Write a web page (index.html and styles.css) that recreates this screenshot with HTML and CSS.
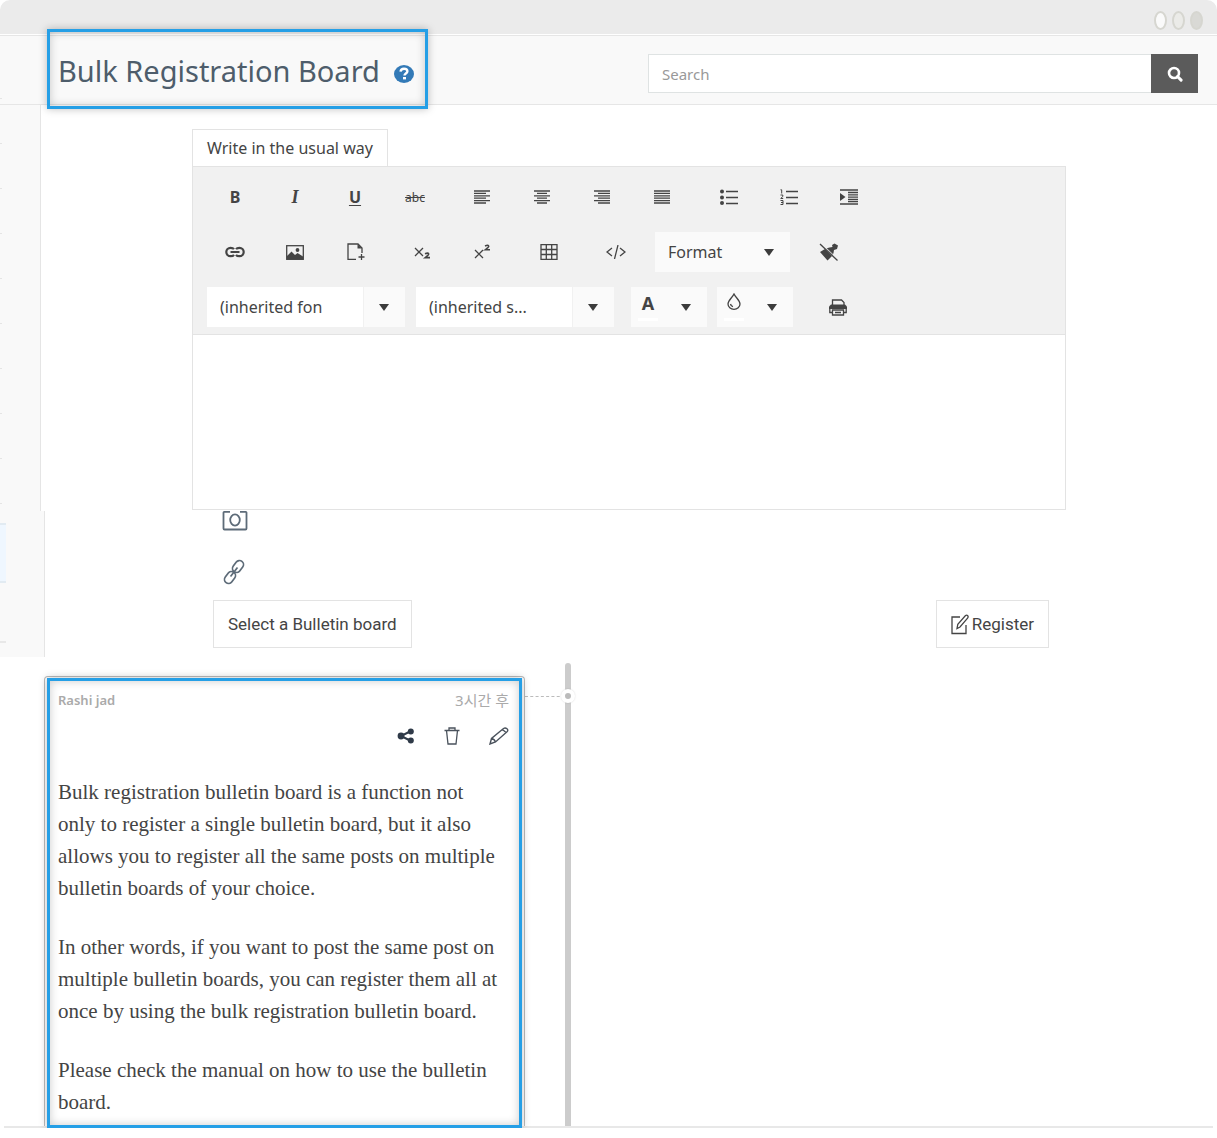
FILE: index.html
```html
<!DOCTYPE html>
<html lang="en">
<head>
    <meta charset="UTF-8">
    <meta name="viewport" content="width=device-width, initial-scale=1.0">
    <title>Bulk Registration Board</title>
    <link rel="stylesheet" href="styles.css">
</head>
<body>
    <div class="window-bar">
        <span class="window-dot light"></span>
        <span class="window-dot"></span>
        <span class="window-dot dark"></span>
    </div>

    <header class="page-header">
        <div class="highlight title-box">
            <h1>Bulk Registration Board</h1>
            <a href="#" class="help" aria-label="Help">
                <svg width="20" height="18" viewBox="0 0 20 18">
                    <ellipse cx="10" cy="9" rx="10" ry="9" fill="#337ab7"/>
                    <path d="M6.5 6.6C6.8 4.6 8.2 3.7 10 3.7c2 0 3.4 1 3.4 2.6 0 2.3-2.9 2.2-2.9 4.2" fill="none" stroke="#fff" stroke-width="2.4"/>
                    <path d="M9 12h3v2.4H9z" fill="#fff"/>
                </svg>
            </a>
        </div>
        <form class="search" role="search">
            <input type="text" placeholder="Search" aria-label="Search">
            <button type="button" aria-label="Search">
                <svg width="16" height="16" viewBox="0 0 16 16" fill="none" stroke="#fff">
                    <circle cx="7" cy="7" r="5" stroke-width="2.6"/>
                    <path d="M10.5 10.5l3.6 3.6" stroke-width="3" stroke-linecap="round"/>
                </svg>
            </button>
        </form>
    </header>

    <div class="section">
        <aside class="sidebar"></aside>
        <main class="content">
            <div class="editor">
                <button class="editor-tab">Write in the usual way</button>
                <div class="toolbar">
                    <div class="toolbar-row">
                        <div class="group">
                            <button class="tool bold">B</button>
                            <button class="tool italic">I</button>
                            <button class="tool underline">U</button>
                            <button class="tool strike">abc</button>
                        </div>
                        <div class="group">
                            <button class="tool" aria-label="Align left">
                                <svg width="16" height="14" viewBox="0 0 16 14"><path d="M0 1h16M0 3.4h12M0 5.8h16M0 8.2h12M0 10.6h16M0 13h12"/></svg>
                            </button>
                            <button class="tool" aria-label="Align center">
                                <svg width="16" height="14" viewBox="0 0 16 14"><path d="M0 1h16M3 3.4h10M0 5.8h16M3 8.2h10M0 10.6h16M3 13h10"/></svg>
                            </button>
                            <button class="tool" aria-label="Align right">
                                <svg width="16" height="14" viewBox="0 0 16 14"><path d="M0 1h16M4 3.4h12M0 5.8h16M4 8.2h12M0 10.6h16M4 13h12"/></svg>
                            </button>
                            <button class="tool" aria-label="Justify">
                                <svg width="16" height="14" viewBox="0 0 16 14"><path d="M0 1h16M0 3.4h16M0 5.8h16M0 8.2h16M0 10.6h16M0 13h16"/></svg>
                            </button>
                        </div>
                        <div class="group">
                            <button class="tool" aria-label="Bulleted list">
                                <svg width="18" height="16" viewBox="0 0 18 16"><path d="M6 2.5h12M6 8.5h12M6 14.5h12"/><g class="solid"><circle cx="2" cy="2.5" r="2"/><circle cx="2" cy="8.5" r="2"/><circle cx="2" cy="14" r="2"/></g></svg>
                            </button>
                            <button class="tool" aria-label="Numbered list">
                                <svg width="18" height="16" viewBox="0 0 18 16"><path d="M6 2.5h12M6 8.5h12M6 14.5h12"/><path stroke-width="1" d="M.5 .8h1.200v3.700M.5 6h2.300v1.500L.7 9.500h2.500M.5 11.500h2.500v4H.5M1 13.500h2"/></svg>
                            </button>
                            <button class="tool" aria-label="Indent">
                                <svg width="18" height="16" viewBox="0 0 18 16"><path d="M0 1h18M8 3.5h10M8 5.8h10M8 8.1h10M8 10.4h10M8 12.5h10M0 15h18"/><path class="solid" d="M0 4l5.5 4L0 12z"/></svg>
                            </button>
                        </div>
                    </div>

                    <div class="toolbar-row">
                        <div class="group">
                            <button class="tool" aria-label="Insert link">
                                <svg width="20" height="12" viewBox="0 0 20 12"><path stroke-width="2.2" d="M9 3.2C8.3 2.2 7.3 1.8 5.5 1.8a4.2 4.2 0 0 0 0 8.4C7.3 10.2 8.3 9.800 9 8.800M11 3.200C11.700 2.200 12.700 1.800 14.500 1.800a4.200 4.200 0 0 1 0 8.400C12.700 10.200 11.700 9.800 11 8.800M5.500 6h9"/></svg>
                            </button>
                            <button class="tool" aria-label="Insert image">
                                <svg width="18" height="15" viewBox="0 0 18 15"><rect x=".7" y=".7" width="16.6" height="13.6"/><path class="solid" d="M1 11l4.500-4.500L9 10l2.500-2L17 11.500v3H1z"/><circle class="solid" cx="11.5" cy="5" r="1.9"/></svg>
                            </button>
                            <button class="tool" aria-label="Insert file">
                                <svg width="20" height="18" viewBox="0 0 20 18"><path d="M11 16.300H3V1h10l4 4v5M16.500 11v6M13.500 14h6"/><path class="solid" d="M12.500 1L17 5.500h-4.500z"/></svg>
                            </button>
                        </div>
                        <div class="group">
                            <button class="tool" aria-label="Subscript">
                                <svg width="16" height="14" viewBox="0 0 16 14"><path d="M1 3l8 8M9 3l-8 8"/><path stroke-width="1.600" d="M11 8.800q3.500-1.500 3.700.3 0 1-3.400 3.500H16"/></svg>
                            </button>
                            <button class="tool" aria-label="Superscript">
                                <svg width="16" height="16" viewBox="0 0 16 16"><path d="M1 6l8 8M9 6l-8 8"/><path stroke-width="1.600" d="M11 2q3.500-1.500 3.700.3 0 1-3.400 3.500H16"/></svg>
                            </button>
                        </div>
                        <div class="group">
                            <button class="tool" aria-label="Insert table">
                                <svg width="18" height="16" viewBox="0 0 18 16"><path d="M1 .7h16v14.600H1zM1 5.500h16M1 10.500h16M6.300 1v14M11.700 1v14"/></svg>
                            </button>
                        </div>
                        <div class="group">
                            <button class="tool" aria-label="View HTML">
                                <svg width="20" height="14" viewBox="0 0 20 14"><path d="M6 3L1 7l5 4M14 3l5 4-5 4M12 0L8.500 14"/></svg>
                            </button>
                        </div>
                        <div class="picker format">
                            <select aria-label="Format"><option>Format</option></select>
                        </div>
                        <button class="tool" aria-label="Clean formatting">
                            <svg width="20" height="18" viewBox="0 0 20 18"><path class="solid" d="M1 9l5-3 7 7-4.500 4.500zM7 5.500l3.500-1 3-.5L13 2l2.500-1.500L19 2.500 18 6l-3 1-.5 3-1 2.500z"/><path stroke="#f1f1f1" stroke-width="1" d="M2.500 .5l16.500 16"/><path d="M1 1l17.500 16.500"/></svg>
                        </button>
                    </div>

                    <div class="toolbar-row">
                        <div class="picker combo">
                            <select aria-label="Font family"><option>(inherited fon</option></select>
                        </div>
                        <div class="picker combo">
                            <select aria-label="Font size"><option>(inherited s...</option></select>
                        </div>
                        <div class="colors">
                            <button class="color-tool" aria-label="Text color">
                                <span class="swatch">A</span>
                                <span class="caret"></span>
                            </button>
                            <button class="color-tool" aria-label="Background color">
                                <span class="swatch">
                                    <svg width="14" height="17" viewBox="0 0 14 17"><path d="M7 1C5 5 1 7.500 1 11a6 5.300 0 0 0 12 0C13 7.500 9 5 7 1zM3.500 11c.3 1.500 1 2.300 2.500 2.700"/></svg>
                                </span>
                                <span class="caret"></span>
                            </button>
                        </div>
                        <button class="tool" aria-label="Print">
                            <svg width="18" height="17" viewBox="0 0 18 17"><path d="M3.500 6V1h9l2.500 2.500V6"/><path class="solid" d="M2 5.500h14l2 2V10H0V7.500z"/><path d="M3.500 13.500H.8V9h16.400v4.500h-2.700M3.500 11h11v5h-11zM6 13.500h6"/></svg>
                        </button>
                    </div>
                </div>
                <textarea class="editor-text" aria-label="Post content"></textarea>
            </div>
        </main>
    </div>

    <div class="section">
        <aside class="sidebar lower">
            <div class="sidebar-item active"></div>
            <div class="sidebar-item"></div>
        </aside>
        <div class="content">
            <div class="attach">
                <button class="attach-btn" aria-label="Attach photo">
                    <svg width="26" height="20" viewBox="0 0 26 20" fill="none" stroke="#5d6b78" stroke-width="1.8"><path d="M8 .9H2.200Q1.500.9 1.500 1.600V17.500q0 1 1 1H23.500q1 0 1-1V1.600q0-.7-.7-.7H18"/><ellipse cx="13" cy="9" rx="4.8" ry="5.6"/></svg>
                </button>
                <button class="attach-btn link" aria-label="Attach link">
                    <svg width="24" height="26" viewBox="0 0 24 26" fill="none" stroke="#5d6b78" stroke-width="1.7"><rect x="12" y="1" width="8" height="13" rx="4" transform="rotate(37 16 7.5)"/><rect x="4" y="12" width="8" height="13" rx="4" transform="rotate(37 8 18.5)"/><path d="M8.500 17.500l7-9"/></svg>
                </button>
                <div class="attach-actions">
                    <button class="btn">Select a Bulletin board</button>
                    <button class="btn">
                        <svg width="18" height="21" viewBox="0 0 18 21" fill="none" stroke="#444" stroke-width="1.3"><path d="M9 3H1v16.500h14V11"/><path d="M6 14.500l.8-4.200L14.500 1.500q1.300-.8 2.300.3.800 1.200-.2 2.400L9 13z"/></svg>
                        Register
                    </button>
                </div>
            </div>
        </div>
    </div>

    <section class="timeline">
        <article class="card">
            <div class="highlight post">
                <div class="post-meta">
                    <span class="author">Rashi jad</span>
                    <time lang="ko">3시간 후</time>
                </div>
                <div class="post-actions">
                    <button aria-label="Share">
                        <svg width="18" height="16" viewBox="0 0 18 16"><path d="M14 3L4 8l10 5" fill="none" stroke="#2f3a48" stroke-width="2"/><g fill="#2f3a48"><circle cx="4" cy="8" r="3.4"/><circle cx="13.8" cy="3.6" r="3"/><circle cx="13.8" cy="12.4" r="3"/></g></svg>
                    </button>
                    <button aria-label="Delete">
                        <svg width="18" height="18" viewBox="0 0 18 18" fill="none" stroke="#4a525c" stroke-width="1.3"><path d="M1.500 3.500h15M3.500 3.500L5 17h8l1.500-13.500M6 3.500V1h6v2.500"/></svg>
                    </button>
                    <button aria-label="Edit">
                        <svg width="20" height="18" viewBox="0 0 20 18" fill="none" stroke="#4a525c" stroke-width="1.4"><path d="M1 17l1.500-5.500L14.500 1.500q1.800-1 3.500.3 1.600 1.400 0 3L6.500 15zM2.500 11.500Q5.500 12 6.500 15M13.500 2.500l3.500 3"/></svg>
                    </button>
                </div>
                <div class="post-body">
                    <p>Bulk registration bulletin board is a function not only to register a single bulletin board, but it also allows you to register all the same posts on multiple bulletin boards of your choice.</p>
                    <p>In other words, if you want to post the same post on multiple bulletin boards, you can register them all at once by using the bulk registration bulletin board.</p>
                    <p>Please check the manual on how to use the bulletin board.</p>
                </div>
            </div>
        </article>
        <div class="connector"></div>
        <div class="axis"><span class="axis-dot"></span></div>
    </section>
</body>
</html>
```
FILE: styles.css
```css
* {
    margin: 0;
    padding: 0;
    box-sizing: border-box;
}

body {
    background: #fff;
    color: #444;
    font-family: 'Noto Sans', 'Noto Sans CJK KR', sans-serif;
    font-size: 16px;
}

button,
input,
select,
textarea {
    font: inherit;
    color: inherit;
    border: none;
    border-radius: 0;
    background: none;
}

button {
    cursor: pointer;
}

svg {
    display: block;
}

/* Blue frame */
.highlight {
    border: 3px solid #259fe6;
    box-shadow: 0 0 8px rgba(0, 0, 0, 0.25), inset 0 0 10px rgba(0, 0, 0, 0.2);
}

.window-bar {
    height: 34px;
    padding: 6px 14px 0;
    background: #ebebeb;
    border-radius: 10px 10px 0 0;
    display: flex;
    align-items: center;
    justify-content: flex-end;
    gap: 5px;
}

.window-dot {
    width: 13px;
    height: 19px;
    border: 2px solid #d6d6d0;
    border-radius: 50%;
    background: #ebebe8;
}

.window-dot.light {
    background: #fafafa;
}

.window-dot.dark {
    background: #d9d9d5;
}

.page-header {
    margin-top: 1px;
    padding: 0 19px 0 47px;
    border-top: 1px solid #e6e6e6;
    border-bottom: 1px solid #e6e6e6;
    background: #f9f9f9 linear-gradient(#e5e5e5, #e5e5e5) no-repeat 0 62px / 2px 1px;
    display: flex;
    align-items: flex-end;
    justify-content: space-between;
    gap: 20px;
}

.title-box {
    height: 80px;
    margin: -7px 0 -5px;
    padding: 4px 11px 0 8px;
    display: flex;
    align-items: center;
    gap: 14px;
}

h1 {
    color: #4e5d6b;
    font-size: 29px;
    font-weight: 400;
    line-height: 40px;
}

.help {
    padding-top: 6px;
}

.search {
    flex: 0 1 550px;
    height: 39px;
    margin-bottom: 11px;
    display: flex;
}

.search input {
    flex: 1;
    min-width: 0;
    padding: 0 13px;
    border: 1px solid #dfe3e3;
    border-right: none;
    background: #fff;
    font-size: 15px;
}

.search input::placeholder {
    color: #999;
}

.search button {
    width: 47px;
    background: #5b5b5b;
    display: flex;
    align-items: center;
    justify-content: center;
}

.section {
    display: flex;
}

.sidebar {
    flex: 0 0 41px;
    border-right: 1px solid #e5e5e5;
    background: #f9f9f9 linear-gradient(transparent 44px, #e5e5e5 44px) repeat-y 0 -6px / 2px 45px;
}

.sidebar.lower {
    flex-basis: 45px;
    padding-top: 12px;
    background: #f9f9f9;
}

.sidebar-item {
    width: 6px;
    height: 60px;
    border-bottom: 2px solid #e8e8e8;
}

.sidebar-item.active {
    border-top: 2px solid #e2ebf2;
    border-bottom-color: #e2ebf2;
    background: #eff7ff;
}

.content {
    flex: 1;
    min-width: 0;
}

.editor {
    max-width: 874px;
    margin: 0 auto;
    padding: 24px 0 1px;
}

.editor-tab {
    height: 37px;
    padding: 0 14px;
    border: 1px solid #e3e3e3;
    border-bottom: none;
    background: #fff;
    display: block;
}

.toolbar {
    padding: 10px 12px 7px;
    border: 1px solid #e3e3e3;
    background: #f1f1f1;
    display: flex;
    flex-direction: column;
    gap: 15px;
}

.toolbar-row {
    display: flex;
    flex-wrap: wrap;
    gap: 7px;
}

.group {
    display: flex;
}

.tool {
    width: 60px;
    height: 40px;
    display: flex;
    align-items: center;
    justify-content: center;
}

.tool svg,
.swatch svg {
    fill: none;
    stroke: #444;
    stroke-width: 1.3;
}

.tool .solid {
    fill: #444;
    stroke: none;
}

.bold,
.underline {
    font-weight: 700;
}

.italic {
    font-family: 'Liberation Serif', serif;
    font-size: 18px;
    font-weight: 700;
    font-style: italic;
}

.underline {
    text-decoration: underline;
    text-underline-offset: 2px;
}

.strike {
    font-size: 12px;
    text-decoration: line-through;
}

.picker {
    height: 40px;
    margin: 0 2px;
    background: #fafafa;
    position: relative;
}

.picker select {
    width: 100%;
    height: 100%;
    padding: 0 13px;
    appearance: none;
}

.caret,
.picker::after {
    width: 0;
    height: 0;
    border: 5px solid transparent;
    border-top: 7px solid #3c3c3c;
    border-bottom: none;
}

.picker::after {
    content: '';
    position: absolute;
    right: 16px;
    top: 17px;
    pointer-events: none;
}

.format {
    width: 135px;
}

.combo {
    width: 198px;
    background: linear-gradient(to right, #fff 156px, #f1f1f1 156px, #f1f1f1 157px, #fafafa 157px);
}

.colors {
    margin: 0 8px;
    display: flex;
    gap: 10px;
}

.color-tool {
    width: 76px;
    height: 40px;
    padding: 0 16px 0 7px;
    background: #fafafa;
    display: flex;
    align-items: center;
    justify-content: space-between;
}

.swatch {
    width: 20px;
    height: 28px;
    border-bottom: 3px solid #fff;
    font-size: 18px;
    font-weight: 700;
    line-height: 20px;
    display: flex;
    justify-content: center;
}

.editor-text {
    width: 100%;
    height: 175px;
    padding: 12px;
    border: 1px solid #e3e3e3;
    border-top: none;
    background: #fff;
    display: block;
    resize: none;
    outline: none;
}

.attach {
    max-width: 836px;
    margin: 0 auto;
    padding-bottom: 9px;
}

.attach-btn {
    margin-left: 9px;
    display: block;
}

.attach-btn.link {
    margin-top: 28px;
}

.attach-actions {
    margin-top: 15px;
    display: flex;
    justify-content: space-between;
}

.btn {
    height: 48px;
    padding: 0 14px;
    border: 1px solid #e3e3e3;
    background: #fff;
    color: #444;
    font-family: Roboto, sans-serif;
    font-size: 17px;
    display: flex;
    align-items: center;
    gap: 3px;
}

.timeline {
    margin: 0 4px;
    padding: 0 40px;
    border-bottom: 2px solid #e8e8e8;
    display: flex;
}

.card {
    flex: 0 1 481px;
    margin-top: 19px;
    padding: 1px 2px 0;
    border: 1px solid #bbb;
    border-bottom: none;
    border-radius: 4px 4px 0 0;
}

.post {
    margin-bottom: -2px;
    padding: 9px 10px 7px 8px;
    position: relative;
}

.post-meta {
    color: #aaa;
    font-size: 13px;
    line-height: 20px;
    display: flex;
    justify-content: space-between;
}

.post-meta time {
    font-size: 15px;
}

.author {
    font-weight: 600;
}

.post-actions {
    height: 20px;
    margin-top: 16px;
    display: flex;
    align-items: center;
    justify-content: flex-end;
    gap: 28px;
}

.post-body {
    margin-top: 30px;
    padding-right: 8px;
    font-family: 'Liberation Serif', serif;
    font-size: 21px;
    line-height: 32px;
}

.post-body p + p {
    margin-top: 27px;
}

.connector {
    width: 40px;
    margin-top: 39px;
    border-top: 1px dashed #bbb;
    align-self: flex-start;
}

.axis {
    width: 6px;
    margin-top: 6px;
    border-radius: 3px 3px 0 0;
    background: #ccc;
    position: relative;
}

.axis-dot {
    width: 14px;
    height: 14px;
    border: 4px solid #fff;
    border-radius: 50%;
    background: #bbb;
    box-shadow: 0 0 2px rgba(0, 0, 0, 0.15);
    position: absolute;
    left: -4px;
    top: 26px;
}
```
